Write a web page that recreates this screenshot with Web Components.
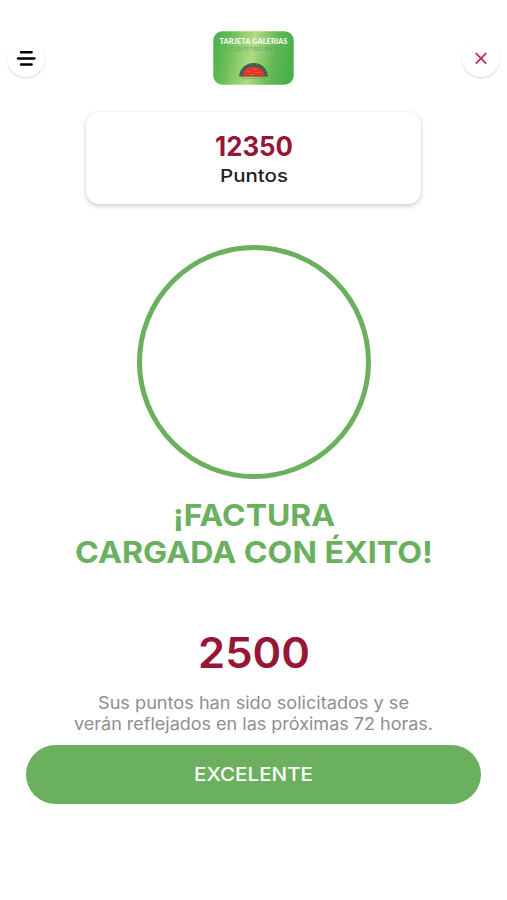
<!DOCTYPE html>
<html lang="es">
<head>
<meta charset="utf-8">
<title>Factura cargada</title>
<style>
html,body{margin:0;background:#fff;font-family:Inter,"Open Sans",sans-serif}
</style>
</head>
<body>
<success-screen></success-screen>
<script>
// One line of text set to an exact advance width.
class FitText extends HTMLElement {
  connectedCallback() {
    const a = n => this.getAttribute(n);
    const w = a('w'), h = a('h');
    this.attachShadow({mode: 'open'}).innerHTML = `
      <style>:host{display:block;width:${w}px;height:${h}px}svg{display:block;overflow:visible}
      text{font-family:Inter,"Open Sans",sans-serif;font-size:${a('size')}px;font-weight:${a('weight')};fill:currentColor}</style>
      <svg width="${w}" height="${h}"><text x="0" y="${a('base')}" textLength="${w}" lengthAdjust="spacingAndGlyphs">${a('text')}</text></svg>`;
  }
}
customElements.define('fit-text', FitText);

class RoundButton extends HTMLElement {
  constructor() {
    super();
    this.attachShadow({mode: 'open'}).innerHTML = `
      <style>:host{display:block;width:38px;height:38px}
      button{display:grid;place-items:center;width:100%;height:100%;padding:0;border:0;border-radius:50%;background:#fff;box-shadow:0 1.5px 2px rgba(0,0,0,.13)}</style>
      <button><slot></slot></button>`;
  }
}
customElements.define('round-button', RoundButton);

class GaleriasCard extends HTMLElement {
  constructor() {
    super();
    this.attachShadow({mode: 'open'}).innerHTML = `
      <style>:host{display:block;width:81px;height:54px}svg{display:block}text{font-family:Lato,sans-serif}</style>
      <svg width="81" height="54" viewBox="0 0 81 54">
        <defs><linearGradient id="g" x1="0" y1="0" x2="1" y2=".12">
          <stop offset="0" stop-color="#43b049"/><stop offset=".22" stop-color="#69bd58"/>
          <stop offset=".52" stop-color="#b0dc83"/><stop offset=".8" stop-color="#62b955"/><stop offset="1" stop-color="#4bb04c"/>
        </linearGradient></defs>
        <rect x=".3" y=".3" width="80.4" height="53.4" rx="9" fill="url(#g)"/>
        <text x="6.5" y="13.2" font-size="7" font-weight="900" fill="#f4fbef" textLength="68" lengthAdjust="spacingAndGlyphs">TARJETA GALERIAS</text>
        <text x="17" y="19.8" font-size="5" fill="#6f9f70" textLength="48" lengthAdjust="spacingAndGlyphs">CLIENTE FRECUENTE</text>
        <path d="M26.2 45.5a14.3 13.6 0 0 1 28.6 0z" fill="#2c5a50"/>
        <path d="M28 44.5a12.5 11.5 0 0 1 25 0" fill="none" stroke="#7b9e78" stroke-width=".8" stroke-dasharray="1.5 1.2"/>
        <path d="M29.3 45.5a11.2 10.5 0 0 1 22.4 0z" fill="#d93a2c"/>
        <path d="M34 40.5h4m2-2h4m-2 3h5m-10 2h4" stroke="#ea6544" stroke-width=".8"/>
        <path d="M29 47.5h24" stroke="#6a9b57" stroke-width=".9" stroke-dasharray="1.2 .5"/>
      </svg>`;
  }
}
customElements.define('galerias-card', GaleriasCard);

class PointsCard extends HTMLElement {
  constructor() {
    super();
    this.attachShadow({mode: 'open'}).innerHTML = `
      <style>:host{display:flex;flex-direction:column;align-items:center;box-sizing:border-box;width:335px;height:92px;padding-top:20px;border-radius:13px;background:#fff;box-shadow:0 2px 5px rgba(0,0,0,.2),0 0 2px rgba(0,0,0,.05)}</style>
      <slot></slot>`;
  }
}
customElements.define('points-card', PointsCard);

class PillButton extends HTMLElement {
  constructor() {
    super();
    this.attachShadow({mode: 'open'}).innerHTML = `
      <style>:host{display:block;width:455px;height:59px}
      button{display:flex;align-items:center;justify-content:center;width:100%;height:100%;padding:0;border:0;border-radius:30px;background:#6ab05f;color:#fff}</style>
      <button><slot></slot></button>`;
  }
}
customElements.define('pill-button', PillButton);

class SuccessScreen extends HTMLElement {
  constructor() {
    super();
    this.attachShadow({mode: 'open'}).innerHTML = `
      <style>
      :host{display:flex;flex-direction:column;align-items:center;box-sizing:border-box;width:507px;height:900px;padding-top:31px;background:#fff;overflow:hidden}
      header{display:flex;justify-content:space-between;align-items:center;box-sizing:border-box;width:100%;height:54px;padding:0 7px}
      svg{display:block}
      points-card{margin-top:27px}
      .num{color:#971637}.dark{color:#222}
      .ring{box-sizing:border-box;width:234px;height:234px;margin-top:41px;border:5px solid #6ab05f;border-radius:50%}
      .title{display:flex;flex-direction:column;align-items:center;margin:19px 0 0;color:#6ab05f}
      .big{margin-top:54px}
      .note{display:flex;flex-direction:column;align-items:center;margin:14px 0 0;color:#8e8e8e}
      pill-button{margin-top:11px}
      </style>
      <header>
        <round-button aria-label="Menú"><svg width="20" height="16" viewBox="0 0 20 16"><path d="M5 2.3h10.6M2 8.4h16.4M5 14.5h10.6" stroke="#000" stroke-width="2.5" stroke-linecap="round"/></svg></round-button>
        <galerias-card></galerias-card>
        <round-button aria-label="Cerrar"><svg width="14" height="14" viewBox="0 0 14 14"><path d="M1.8 2.2l10.4 10.4m0-10.4L1.8 12.6" stroke="#bd2942" stroke-width="1.7"/></svg></round-button>
      </header>
      <points-card>
        <fit-text class="num" text="12350" w="78" h="30" base="24.2" size="26.5" weight="700"></fit-text>
        <fit-text class="dark" text="Puntos" w="68" h="24" base="20" size="17.5" weight="500"></fit-text>
      </points-card>
      <div class="ring"></div>
      <div class="title">
        <fit-text text="¡FACTURA" w="162" h="36" base="28" size="29.8" weight="700"></fit-text>
        <fit-text text="CARGADA CON ÉXITO!" w="358" h="37" base="29" size="29.8" weight="700"></fit-text>
      </div>
      <fit-text class="num big" text="2500" w="112" h="52" base="43" size="42" weight="600"></fit-text>
      <div class="note">
        <fit-text text="Sus puntos han sido solicitados y se" w="311" h="21" base="18" size="17" weight="400"></fit-text>
        <fit-text text="verán reflejados en las próximas 72 horas." w="359" h="22" base="18" size="17" weight="400"></fit-text>
      </div>
      <pill-button><fit-text text="EXCELENTE" w="119" h="22" base="16.8" size="18.6" weight="500"></fit-text></pill-button>`;
  }
}
customElements.define('success-screen', SuccessScreen);
</script>
</body>
</html>
